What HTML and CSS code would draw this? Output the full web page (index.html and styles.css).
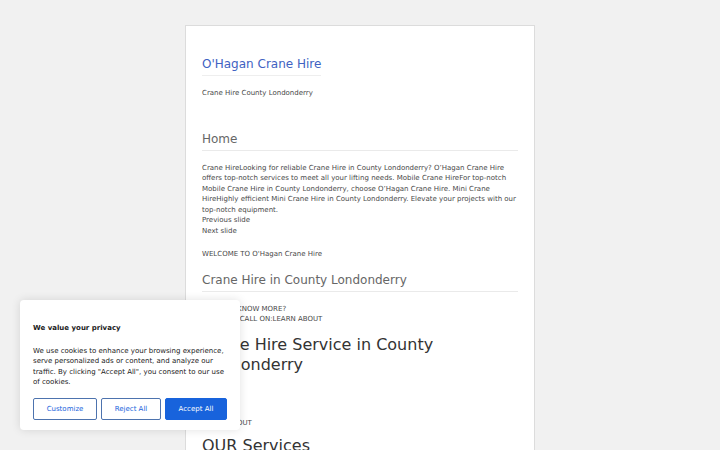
FILE: index.html
```html
<!DOCTYPE html>
<html>
<head>
<meta charset="utf-8">
<link rel="stylesheet" href="styles.css">
</head>
<body>
<div class="page">
  <header class="site-header">
    <a class="site-title" href="#">O'Hagan Crane Hire</a>
    <p class="tagline">Crane Hire County Londonderry</p>
  </header>
  <main class="content">
    <h2 class="section-title">Home</h2>
    <p class="slides">Crane HireLooking for reliable Crane Hire in County Londonderry? O’Hagan Crane Hire offers top-notch services to meet all your lifting needs. Mobile Crane HireFor top-notch Mobile Crane Hire in County Londonderry, choose O’Hagan Crane Hire. Mini Crane HireHighly efficient Mini Crane Hire in County Londonderry. Elevate your projects with our top-notch equipment.<br>Previous slide<br>Next slide</p>
    <p class="welcome">WELCOME TO O'Hagan Crane Hire</p>
    <h2 class="section-title">Crane Hire in County Londonderry</h2>
    <p class="cta">WANT TO KNOW MORE?<br>GIVE US A CALL ON:LEARN ABOUT</p>
    <h1 class="big-title">Crane Hire Service in County Londonderry</h1>
    <p class="learn">LEARN ABOUT</p>
    <h1 class="big-title services">OUR Services</h1>
  </main>
</div>
<div class="cookie">
  <p class="cookie-title">We value your privacy</p>
  <p class="cookie-text">We use cookies to enhance your browsing experience, serve personalized ads or content, and analyze our traffic. By clicking "Accept All", you consent to our use of cookies.</p>
  <div class="cookie-buttons">
    <button class="btn btn-outline">Customize</button>
    <button class="btn btn-outline">Reject All</button>
    <button class="btn btn-primary">Accept All</button>
  </div>
</div>
</body>
</html>
```
FILE: styles.css
```css
html, body {
  margin: 0;
  padding: 0;
  background: #f1f1f1;
  font-family: "DejaVu Sans", sans-serif;
  color: #484848;
  font-size: 7px;
  line-height: 10.5px;
  overflow: hidden;
  height: 450px;
}
.page {
  width: 316px;
  margin: 25px auto 0 185px;
  background: #fff;
  border: 1px solid #dcdcdc;
  padding: 30px 16px 0 16px;
  min-height: 500px;
}
.site-header {
  display: flex;
  flex-direction: column;
  align-items: flex-start;
}
.site-title {
  font-size: 12px;
  line-height: 16px;
  color: #4062c2;
  text-decoration: none;
  padding-bottom: 3px;
  border-bottom: 1px solid #eeeeee;
}
.tagline {
  margin: 12px 0 0 0;
}
.section-title {
  font-size: 12px;
  font-weight: normal;
  color: #666;
  line-height: 16px;
  margin: 0;
  padding-bottom: 3px;
  border-bottom: 1px solid #eaeaea;
}
.content > .section-title:first-child {
  margin-top: 32px;
}
.slides {
  margin: 12px 0 0 0;
}
.welcome {
  margin: 13px 0 0 0;
}
.welcome + .section-title {
  margin-top: 12px;
}
.cta {
  margin: 12px 0 0 0;
}
.big-title {
  font-size: 16px;
  line-height: 20px;
  font-weight: normal;
  color: #333;
  margin: 10px 0 0 0;
}
.learn {
  margin: 43px 0 0 0;
}
.services {
  margin-top: 8px;
}
.cookie {
  position: absolute;
  left: 20px;
  top: 300px;
  width: 194px;
  padding: 23px 13px 10px 13px;
  background: #fff;
  border-radius: 4px;
  box-shadow: 0 0 10px rgba(0,0,0,0.12);
}
.cookie-title {
  margin: 0;
  font-weight: bold;
  color: #212121;
}
.cookie-text {
  margin: 12px 0 0 0;
  color: #212121;
}
.cookie-buttons {
  display: flex;
  gap: 4px;
  margin-top: 10px;
}
.btn {
  font-family: "DejaVu Sans", sans-serif;
  font-size: 7px;
  height: 22px;
  flex: 1 1 auto;
  border-radius: 2px;
  padding: 0;
  cursor: pointer;
}
.btn-outline {
  background: #fff;
  color: #1863dc;
  border: 1px solid #4d73ae;
}
.btn-primary {
  background: #1863dc;
  color: #fff;
  border: 1px solid #1863dc;
}
```
